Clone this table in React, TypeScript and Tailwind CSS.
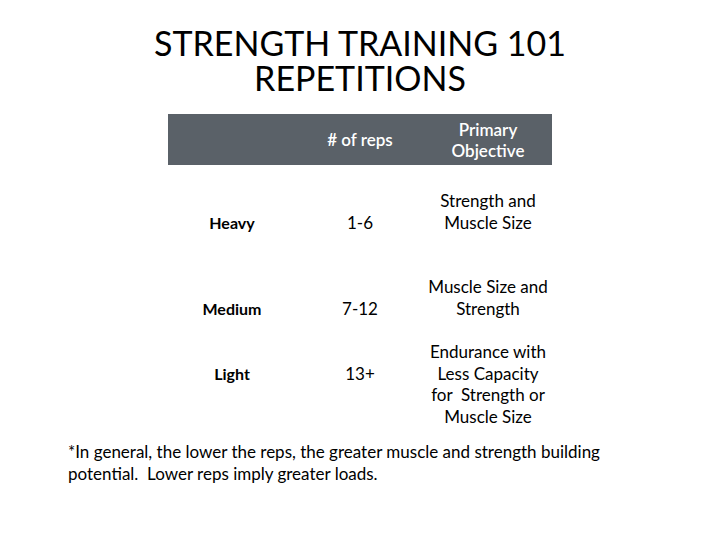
import React from 'react';

const rows = [
  { level: 'Heavy', reps: '1-6', objective: ['Strength and', 'Muscle Size'], gap: 'mt-[25px]' },
  { level: 'Medium', reps: '7-12', objective: ['Muscle Size and', 'Strength'], gap: 'mt-[43px]' },
  {
    level: 'Light',
    reps: '13+',
    objective: ['Endurance with', 'Less Capacity', 'for  Strength or', 'Muscle Size'],
    gap: 'mt-[22px]',
  },
];

export default function App() {
  return (
    <div
      className="w-[720px] h-[540px] bg-white text-black overflow-hidden"
      style={{ fontFamily: 'Lato, "Open Sans", sans-serif' }}
    >
      <h1 className="pt-[25px] text-center text-[34px] leading-[35px] font-normal">
        <div>STRENGTH TRAINING 101</div>
        <div>REPETITIONS</div>
      </h1>

      <div className="ml-[168px] mt-[19px] w-[384px]">
        {/* header */}
        <div className="grid grid-cols-3 items-center h-[51px] bg-[#5a6168] text-white text-[17px] font-semibold leading-[21px] text-center">
          <div></div>
          <div>
            # of reps
          </div>
          <div>
            Primary
            <br />
            Objective
          </div>
        </div>

        {rows.map((r) => (
          <div key={r.level} className={`grid grid-cols-3 text-[17px] leading-[21.5px] text-center ${r.gap}`}>
            <div className="pt-[21.5px] font-bold text-[16px]">{r.level}</div>
            <div className="pt-[21.5px]">{r.reps}</div>
            <div className="whitespace-pre">
              {r.objective.map((line) => (
                <div key={line}>{line}</div>
              ))}
            </div>
          </div>
        ))}
      </div>

      <p className="mt-[14px] pl-[68px] text-[17px] leading-[22px] whitespace-nowrap">
        *In general, the lower the reps, the greater muscle and strength building
        <br />
        potential.&nbsp; Lower reps imply greater loads.
      </p>
    </div>
  );
}
